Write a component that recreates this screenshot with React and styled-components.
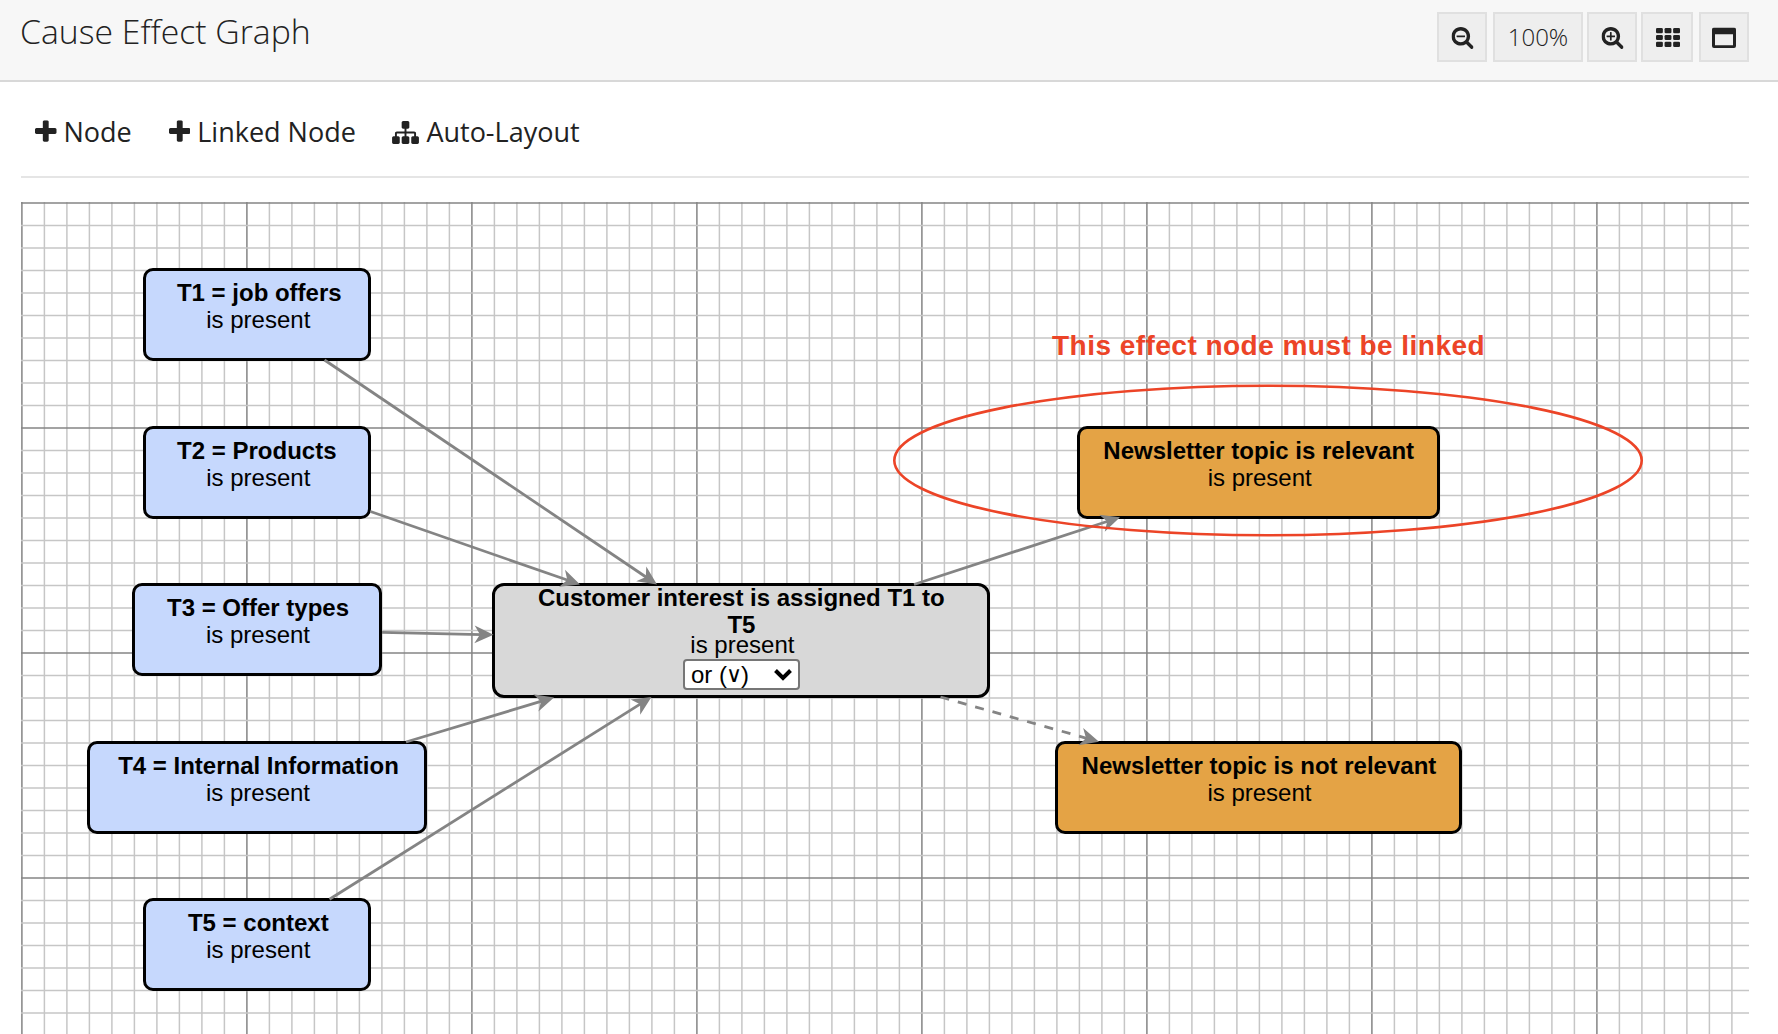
import React from "react";
import styled, { createGlobalStyle } from "styled-components";

const Global = createGlobalStyle`
  *, *::before, *::after { box-sizing: border-box; }
  html, body { margin: 0; padding: 0; background: #fff; overflow: hidden; }
`;

const Page = styled.div`
  display: flex;
  flex-direction: column;
  height: 1034px;
  overflow: hidden;
  color: #222;
  font-family: "Open Sans", sans-serif;
`;

const Header = styled.header`
  display: flex;
  justify-content: space-between;
  align-items: flex-start;
  flex: none;
  height: 82px;
  padding: 12px 29px 0 20px;
  background: #f7f7f7;
  border-bottom: 2px solid #d8d8d8;
`;

const Title = styled.h1`
  margin: -1px 0 0;
  font-size: 33.75px;
  line-height: 40px;
  font-weight: 300;
  white-space: nowrap;
`;

const Controls = styled.div`
  display: flex;
`;

const Control = styled.button`
  display: flex;
  align-items: center;
  justify-content: center;
  width: ${(p) => p.$width ?? 50}px;
  height: 50px;
  margin: 0 0 0 ${(p) => p.$gap ?? 0}px;
  padding: 0;
  border: 2px solid #e0e0e0;
  background: #eee;
  color: #222;
  font: 300 24px/50px "Open Sans", sans-serif;
`;

const Toolbar = styled.nav`
  display: flex;
  align-items: center;
  flex: none;
  height: 96px;
  margin: 0 29px 0 21px;
  padding: 6px 0 0 14px;
  border-bottom: 2px solid #e5e5e5;
`;

const Action = styled.button`
  display: flex;
  align-items: center;
  gap: ${(p) => p.$space}px;
  margin: 0 ${(p) => p.$after ?? 0}px 0 0;
  padding: 0;
  border: 0;
  background: none;
  color: #222;
  font: 400 27px/40px "Open Sans", sans-serif;
  white-space: nowrap;
`;

const Glyph = styled.svg`
  display: block;
  flex: none;
  width: ${(p) => p.$w}px;
  height: ${(p) => p.$h}px;
  fill: currentColor;
  transform: translate(${(p) => p.$dx ?? 0}px, ${(p) => p.$dy ?? 0}px);
`;

const Canvas = styled.main`
  position: relative;
  flex: none;
  width: 1728px;
  height: 832px;
  margin: 24px 0 0 21px;
  overflow: hidden;
  color: #000;
  font-family: "Liberation Sans", Arial, sans-serif;
`;

const Layer = styled.svg`
  position: absolute;
  inset: 0;
  width: 1728px;
  height: 832px;
`;

const Node = styled.section`
  position: absolute;
  left: ${(p) => p.$x}px;
  top: ${(p) => p.$y}px;
  width: ${(p) => p.$w}px;
  height: ${(p) => p.$h ?? 93}px;
  display: flex;
  flex-direction: column;
  align-items: center;
  padding-top: ${(p) => p.$pad ?? 8}px;
  border: 3px solid #000;
  border-radius: ${(p) => p.$r ?? 10}px;
  background: ${(p) => p.$fill};
`;

const Name = styled.strong`
  margin-top: ${(p) => p.$lift ?? 0}px;
  font-size: 24px;
  line-height: 27px;
  font-weight: 700;
  text-align: center;
  white-space: nowrap;
  transform: translateX(${(p) => p.$nudge ?? 0}px);
`;

const Condition = styled.span`
  font-size: 24px;
  line-height: ${(p) => p.$line ?? 27}px;
  white-space: nowrap;
  transform: translateX(1px);
`;

const Picker = styled.div`
  display: flex;
  align-items: center;
  justify-content: space-between;
  width: 117px;
  height: 31px;
  margin-top: 8px;
  padding: 0 6px 0 6px;
  border: 2px solid #767676;
  border-radius: 4px;
  background: #fff;
  font-size: 24px;
  line-height: 27px;
`;

const Choice = styled.span`
  display: flex;
  align-items: center;
  white-space: pre;
`;

const Vee = styled.span`
  font-family: "DejaVu Sans", sans-serif;
  font-size: 22px;
  font-weight: 200;
  line-height: 20px;
  margin: 0 -1px;
`;

const Note = styled.p`
  position: absolute;
  left: 1031px;
  top: 127px;
  margin: 0;
  color: #ec4427;
  font-size: 28px;
  line-height: 34px;
  font-weight: 700;
  letter-spacing: 0.47px;
  white-space: nowrap;
`;

const LENS =
  "M1216 832q0-185-131.5-316.5t-316.5-131.5-316.5 131.5-131.5 316.5 131.5 316.5 316.5 131.5 316.5-131.5 131.5-316.5zm512 832q0 53-37.5 90.5t-90.5 37.5q-54 0-90-38l-343-342q-179 124-399 124-143 0-273.5-55.5t-225-150-150-225-55.5-273.5 55.5-273.5 150-225 225-150 273.5-55.5 273.5 55.5 225 150 150 225 55.5 273.5q0 220-124 399l343 343q37 37 37 90z";
const MINUS =
  "M1088 800v64q0 13-9.5 22.5t-22.5 9.5h-576q-13 0-22.5-9.5t-9.5-22.5v-64q0-13 9.5-22.5t22.5-9.5h576q13 0 22.5 9.5t9.5 22.5z";
const CROSS =
  "M1088 800v64q0 13-9.5 22.5t-22.5 9.5h-224v224q0 13-9.5 22.5t-22.5 9.5h-64q-13 0-22.5-9.5t-9.5-22.5v-224h-224q-13 0-22.5-9.5t-9.5-22.5v-64q0-13 9.5-22.5t22.5-9.5h224v-224q0-13 9.5-22.5t22.5-9.5h64q13 0 22.5 9.5t9.5 22.5v224h224q13 0 22.5 9.5t9.5 22.5z";
const PLUS =
  "M1600 736v192q0 40-28 68t-68 28h-416v416q0 40-28 68t-68 28h-192q-40 0-68-28t-28-68v-416h-416q-40 0-68-28t-28-68v-192q0-40 28-68t68-28h416v-416q0-40 28-68t68-28h192q40 0 68 28t28 68v416h416q40 0 68 28t28 68z";
const TREE =
  "M1792 1248v320q0 40-28 68t-68 28h-320q-40 0-68-28t-28-68v-320q0-40 28-68t68-28h96v-192h-512v192h96q40 0 68 28t28 68v320q0 40-28 68t-68 28h-320q-40 0-68-28t-28-68v-320q0-40 28-68t68-28h96v-192h-512v192h96q40 0 68 28t28 68v320q0 40-28 68t-68 28h-320q-40 0-68-28t-28-68v-320q0-40 28-68t68-28h96v-192q0-52 38-90t90-38h512v-192h-96q-40 0-68-28t-28-68v-320q0-40 28-68t68-28h320q40 0 68 28t28 68v320q0 40-28 68t-68 28h-96v192h512q52 0 90 38t38 90v192h96q40 0 68 28t28 68z";

const Zoom = ({ sign }) => (
  <Glyph viewBox="64 128 1664 1664" $w={22} $h={22} $dx={0.5} $dy={1}>
    <path d={sign + LENS} fillRule="evenodd" />
  </Glyph>
);

const Plus = () => (
  <Glyph viewBox="192 128 1408 1408" $w={21.5} $h={21.5} $dy={-0.7}>
    <path d={PLUS} />
  </Glyph>
);

const BLUE = "#c6d8fd";
const ORANGE = "#e4a345";

const NODES = [
  { name: "T1 = job offers", x: 122.3, y: 66.2, w: 228, fill: BLUE, nudge: 2 },
  { name: "T2 = Products", x: 122.3, y: 223.7, w: 228, fill: BLUE, nudge: -0.5 },
  { name: "T3 = Offer types", x: 111, y: 381.3, w: 250, fill: BLUE, nudge: 1 },
  { name: "T4 = Internal Information", x: 66, y: 538.7, w: 340, fill: BLUE, nudge: 1.5 },
  { name: "T5 = context", x: 122.3, y: 696.4, w: 228, fill: BLUE, nudge: 1 },
  { name: "Newsletter topic is relevant", x: 1056.2, y: 223.7, w: 363, fill: ORANGE, nudge: 0 },
  { name: "Newsletter topic is not relevant", x: 1033.7, y: 538.7, w: 407.5, fill: ORANGE, nudge: 0.5 },
];

const EDGES = [
  [324.5, 360, 657, 584.5],
  [370.5, 511.5, 580, 584.5],
  [382, 632.3, 493.5, 634.8],
  [406, 742, 554, 697.5],
  [329.5, 899.3, 651.5, 697],
  [914, 584.5, 1120, 517.3],
  [940.5, 697, 1099, 741.8, true],
];

function Edge({ line: [x1, y1, x2, y2, dashed] }) {
  const length = Math.hypot(x2 - x1, y2 - y1);
  const angle = (Math.atan2(y2 - y1, x2 - x1) * 180) / Math.PI;
  return (
    <g transform={`translate(${x1} ${y1}) rotate(${angle})`}>
      <line x2={length - 12} stroke="#848484" strokeWidth="2.8" strokeDasharray={dashed ? "9 9" : undefined} />
      <path d="M0 0L-19 -9L-13.5 0L-19 9Z" fill="#848484" transform={`translate(${length} 0)`} />
    </g>
  );
}

function Grid() {
  const minorFirst = (a, b) => (a % 10 === 0) - (b % 10 === 0);
  const cols = Array.from({ length: 77 }, (_, i) => i).sort(minorFirst);
  const rows = Array.from({ length: 38 }, (_, i) => i).sort(minorFirst);
  const tone = (i) => (i % 10 === 0 ? "#848484" : "#c6c6c6");
  return (
    <Layer viewBox="21 202 1728 832">
      {cols.map((i) => (
        <line key={`c${i}`} x1={21.9 + i * 22.5} x2={21.9 + i * 22.5} y1="202" y2="1034" stroke={tone(i)} strokeWidth="1.5" />
      ))}
      {rows.map((i) => (
        <line key={`r${i}`} x1="21" x2="1749" y1={202.9 + i * 22.5} y2={202.9 + i * 22.5} stroke={tone(i)} strokeWidth="1.5" />
      ))}
    </Layer>
  );
}

export default function App() {
  return (
    <Page>
      <Global />
      <Header>
        <Title>Cause Effect Graph</Title>
        <Controls>
          <Control><Zoom sign={MINUS} /></Control>
          <Control $width={90} $gap={6}>100%</Control>
          <Control $gap={4}><Zoom sign={CROSS} /></Control>
          <Control $width={52} $gap={4}>
            <Glyph viewBox="0 128 1792 1408" $w={24} $h={19} $dx={1}>
              {[0, 1, 2].flatMap((r) =>
                [0, 1, 2].map((c) => (
                  <rect key={`${r}${c}`} x={c * 640} y={128 + r * 512} width="512" height="384" rx="96" />
                ))
              )}
            </Glyph>
          </Control>
          <Control $gap={6}>
            <Glyph viewBox="0 0 24 21" $w={24} $h={21} $dy={0.5}>
              <path
                fillRule="evenodd"
                d="M2 0H22A2 2 0 0 1 24 2V18.5A2 2 0 0 1 22 20.5H2A2 2 0 0 1 0 18.5V2A2 2 0 0 1 2 0ZM3 6.7V17.8H21V6.7Z"
              />
            </Glyph>
          </Control>
        </Controls>
      </Header>
      <Toolbar>
        <Action $space={7} $after={37}><Plus />Node</Action>
        <Action $space={7} $after={36.5}><Plus />Linked Node</Action>
        <Action $space={7}>
          <Glyph viewBox="0 128 1792 1536" $w={27} $h={23}><path d={TREE} /></Glyph>
          Auto-Layout
        </Action>
      </Toolbar>
      <Canvas>
        <Grid />
        {NODES.map((n) => (
          <Node key={n.name} $x={n.x} $y={n.y} $w={n.w} $fill={n.fill}>
            <Name $nudge={n.nudge}>{n.name}</Name>
            <Condition>is present</Condition>
          </Node>
        ))}
        <Node $x={471.4} $y={381.3} $w={498} $h={115} $r={12} $pad={0} $fill="#d8d8d8">
          <Name $lift={-2}>Customer interest is assigned T1 to<br />T5</Name>
          <Condition $line={13}>is present</Condition>
          <Picker>
            <Choice>or (<Vee>∨</Vee>)</Choice>
            <Glyph viewBox="0 0 18 12" $w={18} $h={12}>
              <path d="M1.5 1.5L9 9L16.5 1.5" fill="none" stroke="#000" strokeWidth="4" />
            </Glyph>
          </Picker>
        </Node>
        <Note>This effect node must be linked</Note>
        <Layer viewBox="21 202 1728 832">
          {EDGES.map((line) => <Edge key={line.join()} line={line} />)}
          <ellipse cx="1268" cy="460.5" rx="373.7" ry="74.8" fill="none" stroke="#ec4427" strokeWidth="2.6" />
        </Layer>
      </Canvas>
    </Page>
  );
}
